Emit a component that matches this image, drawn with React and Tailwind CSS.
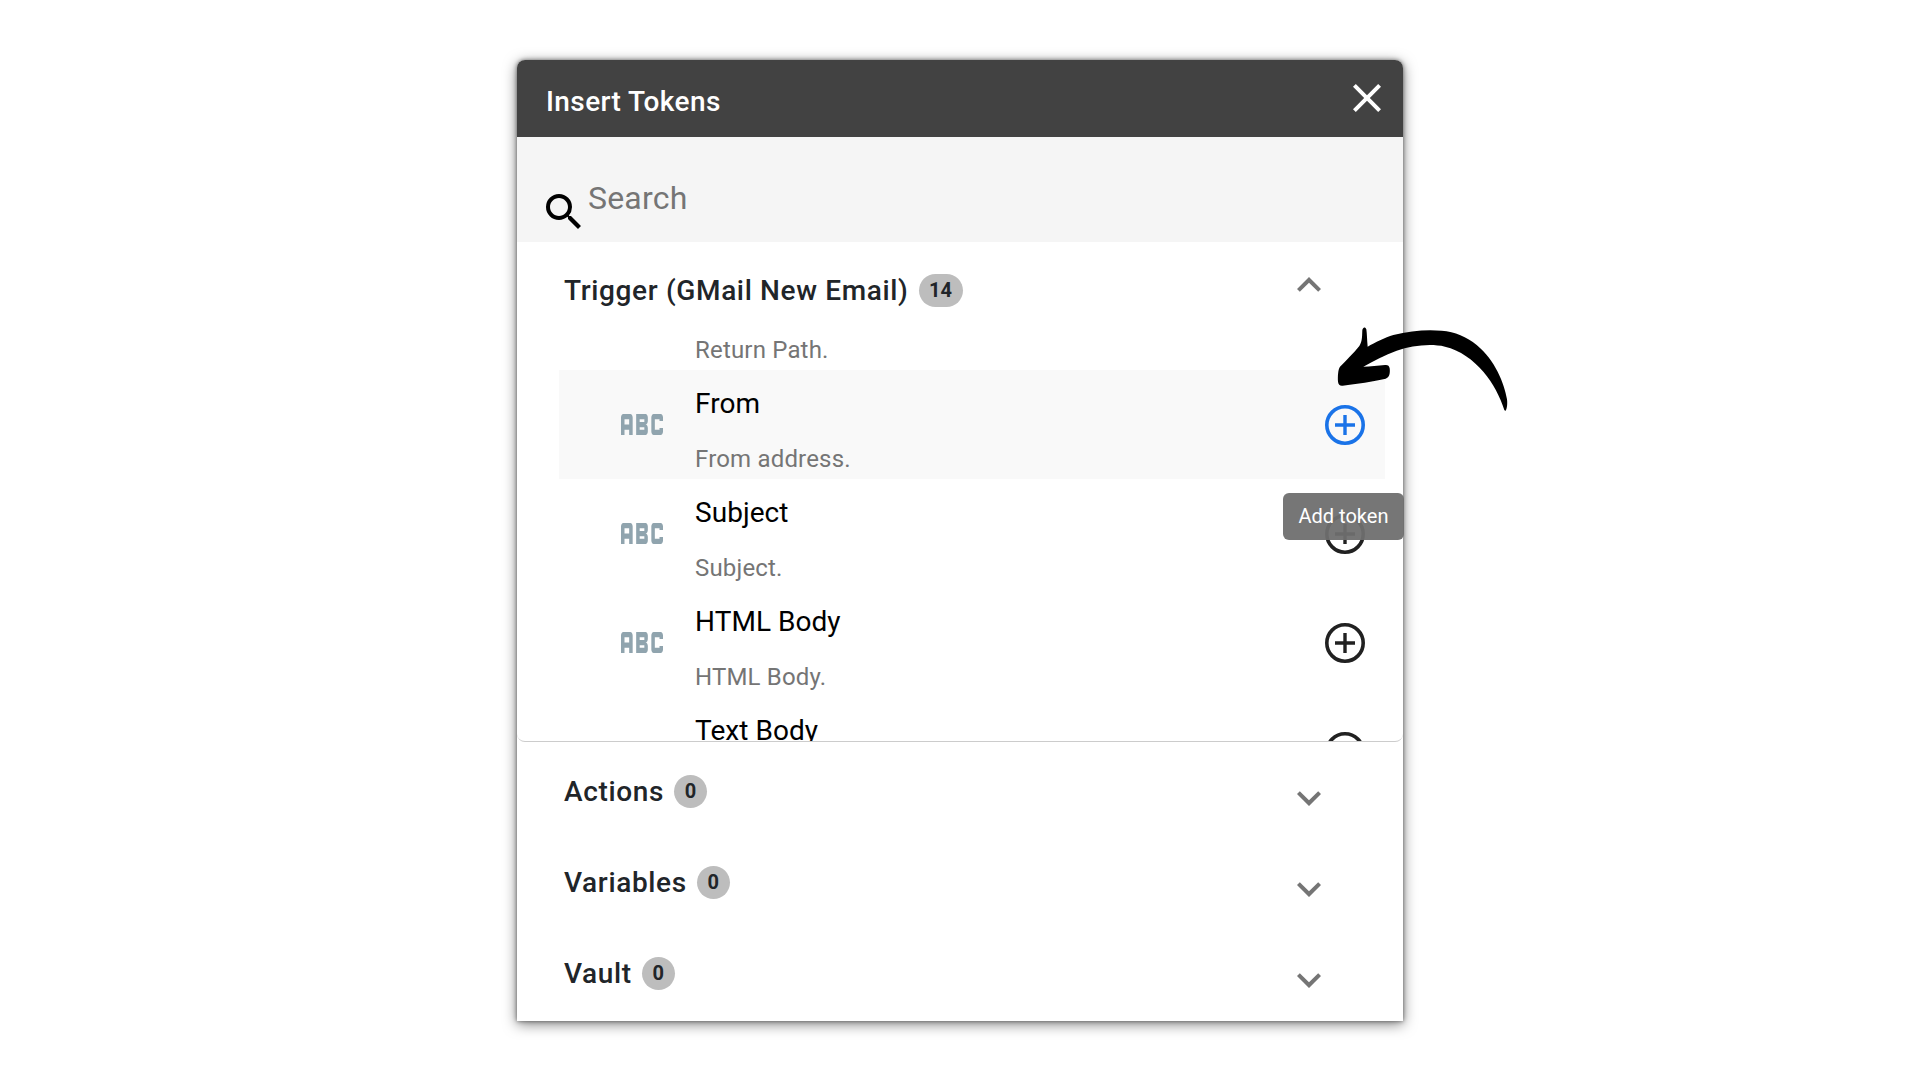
import React from "react";
import { MdAbc, MdClose, MdExpandLess, MdExpandMore, MdSearch } from "react-icons/md";

const font = { fontFamily: "Roboto, 'Noto Sans', sans-serif" };

function Plus({ className }) {
  return (
    <svg viewBox="0 0 40 40" className={className} fill="none" stroke="currentColor">
      <circle cx="20" cy="20" r="18.2" strokeWidth="3.6" />
      <path d="M20 10V30M10 20H30" strokeWidth="3.4" />
    </svg>
  );
}

function Row({ title, desc, active }) {
  return (
    <div className={`h-[109px] flex shrink-0 ${active ? "bg-[#f9f9f9]" : ""}`}>
      <div className="w-[136px] shrink-0 flex items-center pl-[62px]">
        <MdAbc viewBox="3 9 18 6" preserveAspectRatio="none" className="w-[42px] h-[21px] text-[#90a4ae]" />
      </div>
      <div className="flex-1 min-w-0">
        <div className="text-[28px] leading-[32px] text-black mt-[18px] tracking-[0.05px]">{title}</div>
        {desc && <div className="text-[24px] leading-[28px] text-[#757575] mt-[25px] tracking-[0.18px]">{desc}</div>}
      </div>
      <div className="w-[100px] shrink-0 flex items-center pl-[40px]">
        <Plus className={`w-10 h-10 ${active ? "text-[#1a73e8]" : "text-[#212121]"}`} />
      </div>
    </div>
  );
}

function Section({ label, count, wide, open, className }) {
  const Chevron = open ? MdExpandLess : MdExpandMore;
  return (
    <div className={`flex items-start pl-[47px] pr-[70px] ${className}`}>
      <span className="text-[28px] leading-[34px] font-medium text-[#212529] tracking-[0.65px]">{label}</span>
      <span className={`ml-[10px] h-[33px] rounded-full bg-[#bdbdbd] text-[20px] leading-[33px] font-bold text-[#212529] text-center ${wide ? "w-[44px]" : "w-[33px]"}`}>
        {count}
      </span>
      <Chevron className={`ml-auto w-[48px] h-[48px] shrink-0 text-[#757575] ${open ? "-mt-[13px]" : "-mt-[1px]"}`} />
    </div>
  );
}

export default function App() {
  return (
    <div className="relative min-h-[1080px] bg-white pt-[60px]" style={font}>
      <div className="relative mx-auto w-[886px] h-[961px] rounded-t-[8px] bg-white shadow-[0_0_4px_rgba(0,0,0,0.5),0_3px_14px_rgba(0,0,0,0.5)] flex flex-col">
        <header className="h-[77px] shrink-0 rounded-t-[8px] bg-[#424242] flex items-center pl-[29px] pr-[12px]">
          <h1 className="text-[28px] leading-[34px] font-medium text-white mt-[6px] tracking-[0.4px]">Insert Tokens</h1>
          <MdClose className="ml-auto w-[48px] h-[48px] text-white -mt-[2px]" />
        </header>
        <div className="h-[105px] shrink-0 bg-[#f5f5f5] flex pl-[23px]">
          <MdSearch className="w-[48px] h-[48px] text-black mt-[51px] shrink-0" />
          <span className="text-[32px] leading-[38px] text-[#757575] mt-[42px] tracking-[0.2px]">Search</span>
        </div>
        <div className="h-[500px] shrink-0 overflow-hidden rounded-b-[8px] border-b-[1.5px] border-[#cccccc]">
          <Section label="Trigger (GMail New Email)" count="14" wide open className="h-[75px] pt-[32px]" />
          <div className="h-[53px] pl-[178px] pt-[19px] text-[24px] leading-[28px] text-[#757575] tracking-[0.18px]">Return Path.</div>
          <div className="ml-[42px] mr-[18px] flex flex-col">
            <Row title="From" desc="From address." active />
            <Row title="Subject" desc="Subject." />
            <Row title="HTML Body" desc="HTML Body." />
            <Row title="Text Body" />
          </div>
        </div>
        <Section label="Actions" count="0" className="h-[91px] pt-[33px]" />
        <Section label="Variables" count="0" className="h-[91px] pt-[33px]" />
        <Section label="Vault" count="0" className="h-[88px] pt-[33px]" />

        <div className="absolute left-[766px] top-[433px] w-[121px] h-[47px] rounded-[6px] bg-[#6f6f6f]/95 text-white text-[20px] leading-[47px] text-center">
          Add token
        </div>
      </div>
      <svg viewBox="0 0 600 360" className="absolute left-[1320px] top-[310px] w-[200px] h-[120px]" fill="#000">
        <path d="M556 303C560 300 563 285 561 268C553 220 525 150 470 105C440 80 405 65 365 62C320 58 270 62 220 75C195 83 165 97 143 110C141 90 141 70 139 58C136 50 129 51 127 60C126 75 128 92 118 108C100 130 80 150 60 170C54 178 53 200 54 215C55 224 60 228 68 227C110 222 160 214 197 206C208 203 211 190 209 175C208 167 203 164 195 165C175 167 150 170 130 170C160 153 195 135 230 122C275 107 330 100 375 110C420 120 460 150 490 185C520 220 540 260 553 300Z" />
      </svg>
    </div>
  );
}
